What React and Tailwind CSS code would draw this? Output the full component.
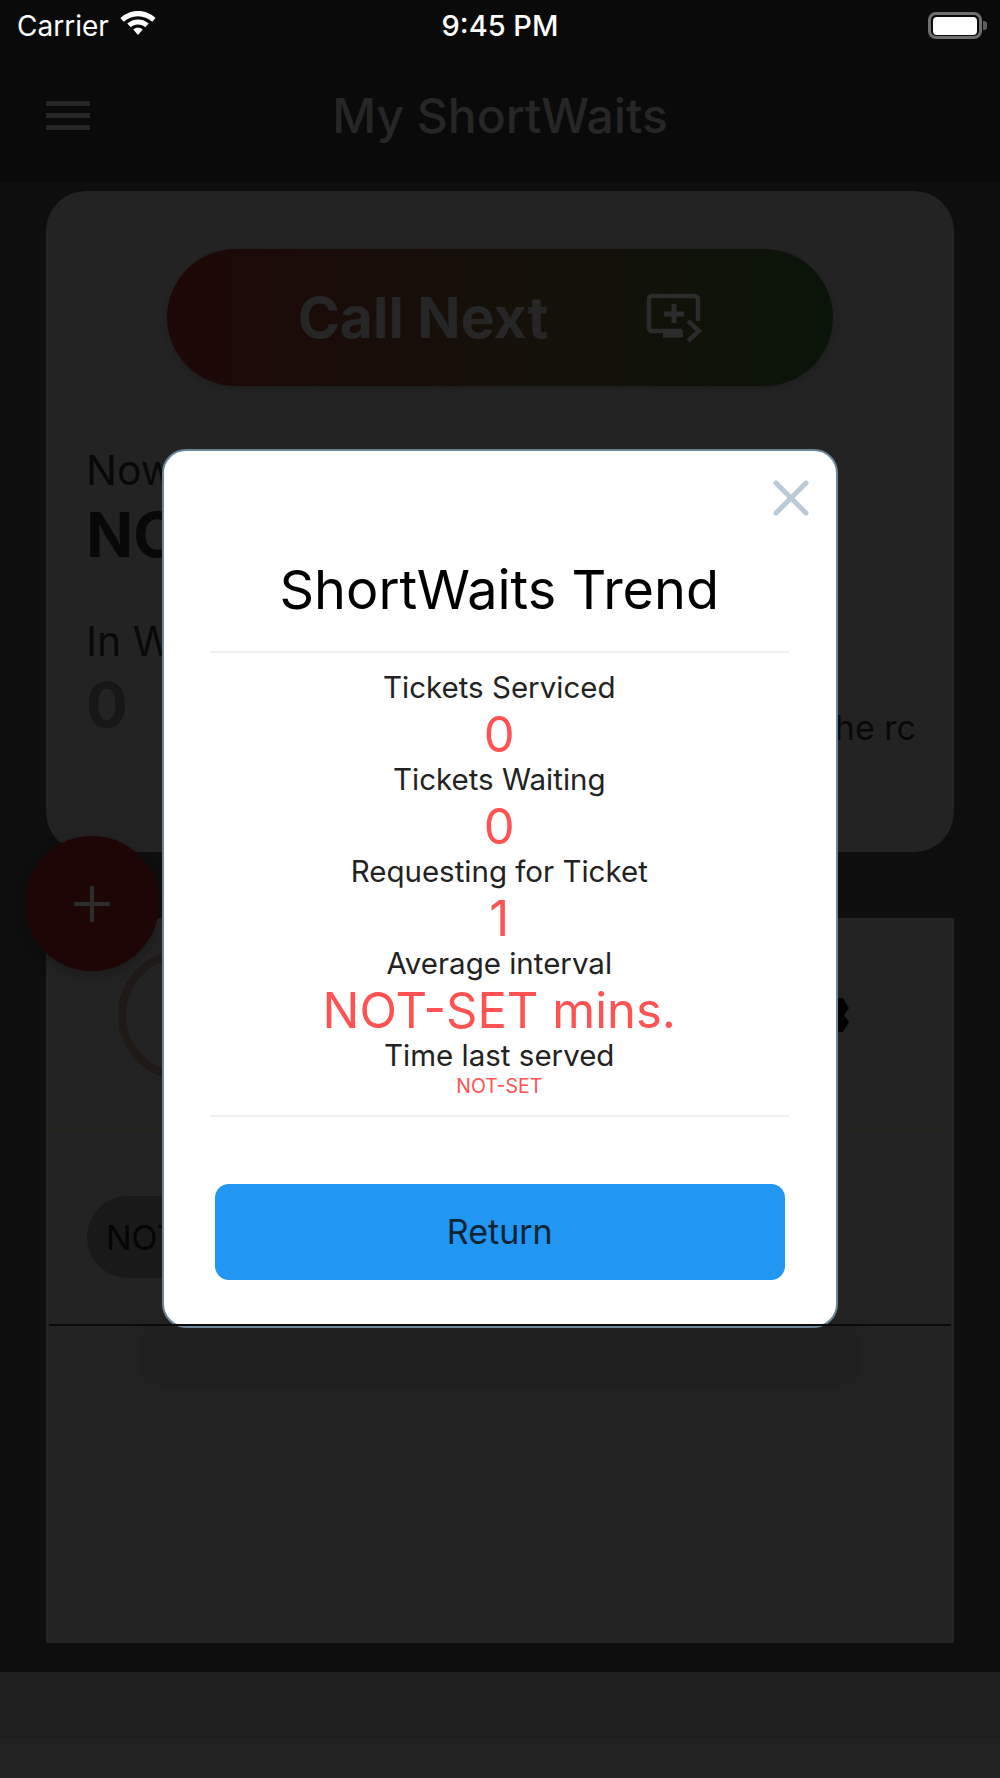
import React from 'react';
import { X, Plus } from 'lucide-react';

const font = { fontFamily: 'Inter, "Liberation Sans", sans-serif' };

const rows = [
  { label: 'Tickets Serviced', value: '0' },
  { label: 'Tickets Waiting', value: '0' },
  { label: 'Requesting for Ticket', value: '1' },
  { label: 'Average interval', value: 'NOT-SET mins.' },
];

const StatusBar = () => (
  <div className="grid h-[51px] grid-cols-[1fr_auto_1fr] items-center px-[17px] text-white">
    <div className="flex items-center gap-[10px] text-[28px]">
      <span>Carrier</span>
      <svg width="38" height="29" viewBox="0 0 36 28" fill="#fff" className="-mt-[6px]">
        <path d="M18 3C11.300 3 5.500 5.600 1 9.700L4.300 13.300C7.900 10 12.700 8 18 8C23.300 8 28.100 10 31.700 13.300L35 9.700C30.500 5.600 24.700 3 18 3Z" />
        <path d="M18 11C14 11 10.400 12.500 7.600 15L11 18.600C12.900 17 15.300 16 18 16C20.700 16 23.100 17 25 18.600L28.400 15C25.600 12.500 22 11 18 11Z" />
        <path d="M18 19C16.200 19 14.600 19.600 13.400 20.700L18 26L22.600 20.700C21.400 19.600 19.800 19 18 19Z" />
      </svg>
    </div>
    <div className="text-[29px] font-medium">9:45 PM</div>
    <div className="-mr-[4px] flex items-center justify-end">
      <div className="flex h-[27px] w-[54px] items-center justify-center rounded-[8px] border-[3px] border-[#6f6f6f]">
        <div className="h-[18px] w-[44px] rounded-[4px] bg-white" />
      </div>
      <div className="ml-[1px] h-[9px] w-[4px] rounded-r-[3px] bg-[#5e5e5e]" />
    </div>
  </div>
);

const NavBar = () => (
  <div className="grid h-[129px] grid-cols-[1fr_auto_1fr] items-center px-[46px]">
    <div className="flex w-[44px] flex-col gap-[7px]">
      <div className="h-[5px] bg-[#262626]" />
      <div className="h-[5px] bg-[#262626]" />
      <div className="h-[5px] bg-[#262626]" />
    </div>
    <div className="text-[48px] font-medium leading-[60px] text-[#262626]">My ShortWaits</div>
  </div>
);

const TopCard = () => (
  <div className="mx-[46px] mt-[8px] flex h-[661px] flex-col rounded-[40px] bg-[#232323] px-[40px] pt-[58px]">
    <div className="mx-[81px] flex h-[137px] items-center justify-center gap-[98px] rounded-full bg-gradient-to-r from-[#1d0807] via-[#15100a] to-[#0a1409] shadow-[0_3px_6px_rgba(0,0,0,0.15)]">
      <span className="text-[57px] font-bold text-[#262626]">Call Next</span>
      <svg width="56" height="50" viewBox="0 0 56 50" fill="none" stroke="#2b2b2b">
        <path d="M52 28V6a3 3 0 0 0-3-3H6a3 3 0 0 0-3 3v29a3 3 0 0 0 3 3h30" strokeWidth="4.500" />
        <path d="M28 11v19M18 21h20" strokeWidth="5" />
        <path d="M17 41h20" strokeWidth="7" />
        <path d="M42 28l11 10-11 10" strokeWidth="4.500" />
      </svg>
    </div>
    <div className="mt-[39px] border-t border-[#262626] pt-[20px] text-[#080808]">
      <div className="text-[41px] leading-[48px]">Now</div>
      <div className="mt-[6px] text-[62px] font-bold leading-[70px]">NOT-SET</div>
    </div>
    <div className="mt-[23px] border-t border-[#262626] pt-[23px]">
      <div className="text-[41px] leading-[48px] text-[#080808]">In Waiting</div>
      <div className="mt-[7px] flex items-start justify-between">
        <span className="text-[62px] font-bold leading-[66px] text-[#171717]">0</span>
        <span className="-mr-[2px] mt-[36px] text-[34px] leading-[40px] text-[#080808]">in the rc</span>
      </div>
    </div>
    <div className="mt-[51px] border-t border-[#262626]" />
  </div>
);

const LowerPanel = () => (
  <div className="mx-[46px] mt-[66px] flex h-[725px] flex-col bg-[#232323]">
    <div className="flex h-[212px] items-center justify-between border-b border-[#2a2518] pb-[18px] pl-[72px] pr-[105px]">
      <div className="h-[130px] w-[130px] rounded-full border-[8px] border-[#1f1a17]" />
      <svg width="20" height="34" viewBox="0 0 20 34" fill="#000">
        <path d="M0 0L14 0L20 10L15 17L20 24L14 34L0 34Z" />
      </svg>
    </div>
    <div className="flex h-[194px] items-center pl-[41px] pt-[20px]">
      <div className="flex h-[82px] w-[220px] items-center rounded-full bg-[#191919] pl-[19px] text-[34px] text-[#050505]">
        NOT-SET
      </div>
    </div>
    <div className="relative z-10 mx-[3px] h-[2px] bg-[#0a0a0a]" />
    <div className="mx-[95px] h-[60px] bg-[#1e1e1e] blur-[8px]" />
  </div>
);

const Background = () => (
  <div className="flex h-[1778px] w-[1000px] flex-col bg-[#0e0e0e]">
    <div className="h-[183px] bg-[#0a0a0a]">
      <StatusBar />
      <NavBar />
    </div>
    <TopCard />
    <LowerPanel />
    <div className="mt-[29px] flex-1 bg-[#1f1f1f]">
      <div className="mt-[65px] h-[41px] border-t border-[#1c1c1c] bg-[#212121]" />
    </div>
  </div>
);

const TrendModal = () => (
  <div className="absolute left-[162px] top-[449px] flex h-[879px] w-[676px] flex-col rounded-[24px] border-[2.500px] border-[#6a8698] bg-white pl-[45.500px] pr-[47px] pt-[16.500px]">
    <div className="-mr-[32px] flex justify-end">
      <X size={60} strokeWidth={2} className="text-[#bccad6]" />
    </div>
    <div className="mt-[30px] text-center text-[54px] leading-[64px] text-black">ShortWaits Trend</div>
    <div className="mt-[29px] flex flex-col items-center border-y-2 border-[#f1f1f1] pb-[18px] pt-[17px] text-center">
      {rows.map((r) => (
        <React.Fragment key={r.label}>
          <div className="text-[29.500px] leading-[34px] text-[#222]">{r.label}</div>
          <div className="pt-[3px] text-[49px] leading-[55px] text-[#ff5252]">{r.value}</div>
        </React.Fragment>
      ))}
      <div className="text-[29.500px] leading-[34px] text-[#222]">Time last served</div>
      <div className="mt-[3px] text-[19.500px] leading-[22px] text-[#ff5252]">NOT-SET</div>
    </div>
    <div className="ml-[5px] mr-[4px] mt-[67px] flex h-[96px] items-center justify-center rounded-[14px] bg-[#2196f3] text-[34px] text-[#0f2433]">
      Return
    </div>
  </div>
);

export default function App() {
  return (
    <div className="relative h-[1778px] w-[1000px] overflow-hidden" style={font}>
      <Background />
      {/* FAB */}
      <div className="absolute left-[25px] top-[836px] flex h-[135px] w-[134px] items-center justify-center rounded-full bg-[#1d0605] shadow-[0_4px_12px_rgba(0,0,0,0.25)]">
        <Plus size={56} strokeWidth={1.800} className="text-[#2c2c2c]" />
      </div>
      <TrendModal />
    </div>
  );
}
